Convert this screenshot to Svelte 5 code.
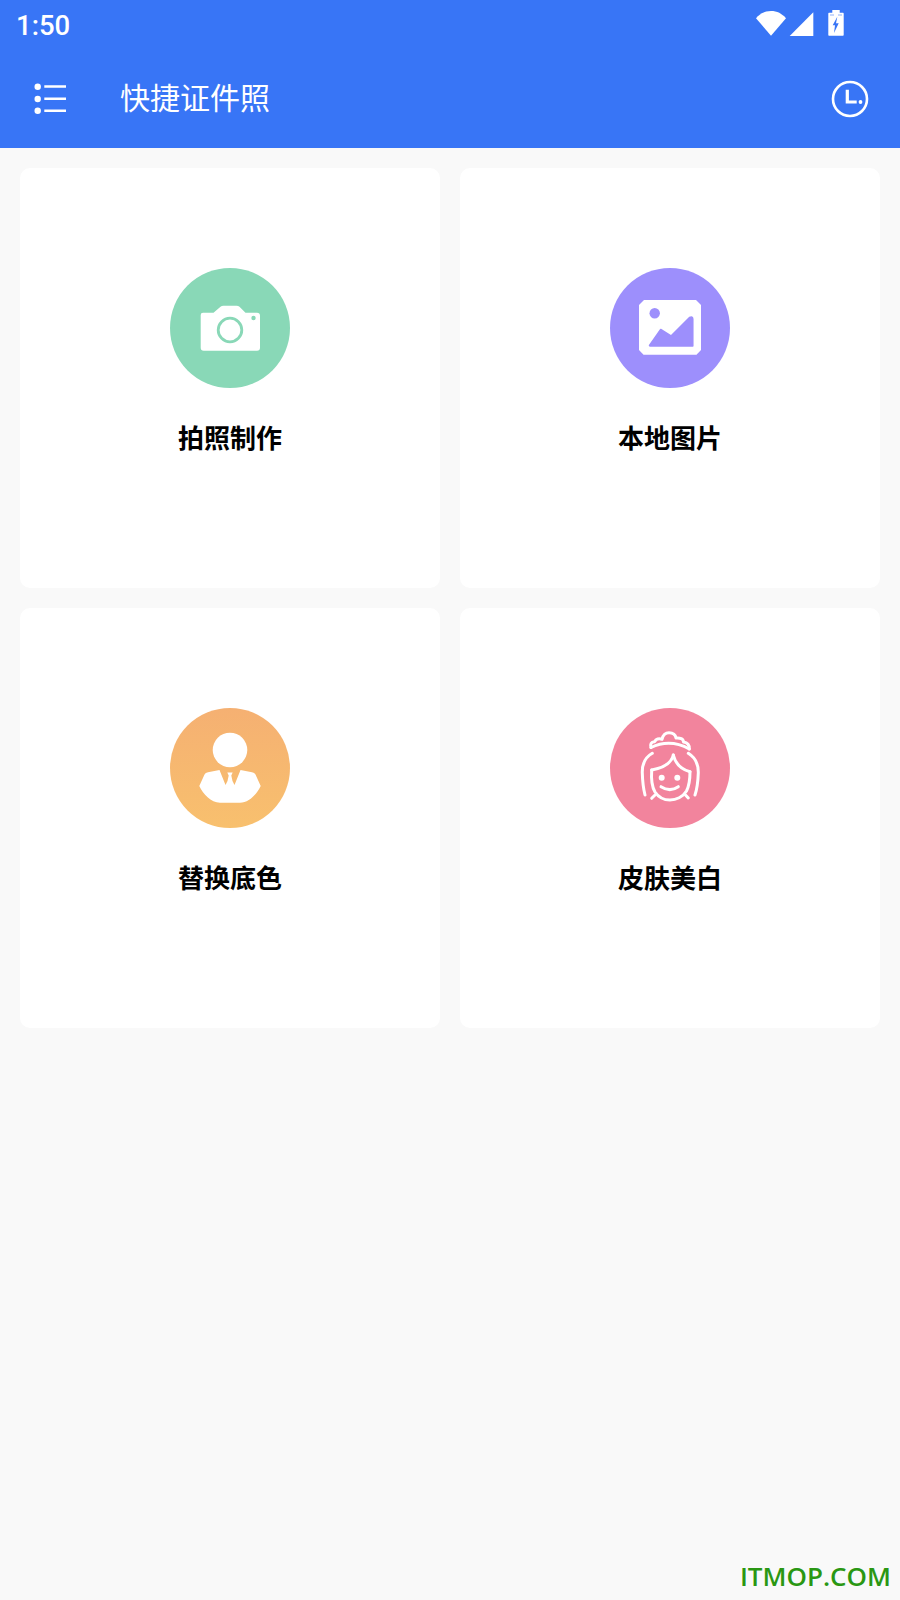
<script>
  const tools = [
    { key: 'camera', label: '拍照制作', tone: 'green' },
    { key: 'image', label: '本地图片', tone: 'purple' },
    { key: 'person', label: '替换底色', tone: 'orange' },
    { key: 'face', label: '皮肤美白', tone: 'pink' }
  ];
</script>

<div class="page">
  <header class="appbar">
    <div class="status">
      <span class="time">1:50</span>
      <svg class="status-icons" width="100" height="30" viewBox="0 0 100 30" aria-hidden="true">
        <path d="M15 29.7 0 12.3C4 7.5 9 5 15 5s11 2.5 15 7.3z" fill="#fff" />
        <path d="M57.3 6.3v24.4H33z" fill="#fff" />
        <path fill-rule="evenodd" fill="#fff" d="M76.3 4h7.4v2.7h3c.6 0 1 .4 1 1v21c0 .6-.4 1-1 1H73.300c-.6 0-1-.4-1-1v-21c0-.6.4-1 1-1h3zM81.300 10.700 76.700 19.300H79L78 27l4.700-9.700h-2.700z" />
        <path d="M74 9h4M82 9h4" stroke="#3875f6" stroke-width="1" opacity=".55" />
      </svg>
    </div>
    <div class="toolbar">
      <svg class="menu" width="40" height="34" viewBox="0 0 40 34" aria-hidden="true">
        <circle cx="7.700" cy="5.700" r="3.200" fill="#fff" />
        <circle cx="7.700" cy="18" r="3.200" fill="#fff" />
        <circle cx="7.700" cy="29.700" r="3.200" fill="#fff" />
        <path d="M14.300 5.500H36M14.300 17.700H36M14.300 29.700H36" stroke="#fff" stroke-width="2.600" fill="none" />
      </svg>
      <h1 class="title">快捷证件照</h1>
      <svg class="clock" width="38" height="38" viewBox="0 0 38 38" aria-hidden="true">
        <circle cx="19" cy="19" r="17" fill="none" stroke="#fff" stroke-width="2.600" />
        <path d="M16.300 9.700V22h9.400" fill="none" stroke="#fff" stroke-width="3.200" />
        <circle cx="29.500" cy="22" r="1.900" fill="#fff" />
      </svg>
    </div>
  </header>

  <main class="grid">
    {#each tools as tool}
      <button class="card" type="button">
        <span class="badge {tool.tone}">
          <svg width="120" height="120" viewBox="0 0 120 120" aria-hidden="true">
            {#if tool.key === 'camera'}
              <path fill="#fff" d="M33 44.700H43.500L50.500 38.700Q51.700 37.700 53.500 37.700H66.500Q68.300 37.700 69.500 38.700L75.500 44.700H87Q90 44.700 90 47.700V79.700Q90 82.700 87 82.700H33.700Q30.700 82.700 30.700 79.700V47Q30.700 44.700 33 44.700Z" />
              <circle cx="60" cy="62" r="11.800" fill="#fff" stroke="#89d8b7" stroke-width="2.800" />
              <circle cx="83.500" cy="50" r="2.200" fill="#89d8b7" />
            {:else if tool.key === 'image'}
              <path fill="#fff" d="M34 32H86L91 37V82L86.500 86.700H33.500L29 82V37Z" />
              <circle cx="44.700" cy="45.300" r="5.200" fill="#9d8ffc" />
              <path fill="#9d8ffc" stroke="#9d8ffc" stroke-width="1.500" stroke-linejoin="round" d="M39.500 77.500 50.700 61.500 61 68 79.500 49.500Q82.800 48 82.800 51V78H40Z" />
            {:else if tool.key === 'person'}
              <circle cx="60" cy="42" r="17.300" fill="#fff" />
              <path fill="#fff" d="M29.300 78 34.500 66.500Q35.500 64.700 38 64.300L49.500 62 55.500 77 57.500 73 58.700 67.500 57.300 64.500H62.700L61.300 67.500 62.500 73 64.500 77 70.500 62 82 64.300Q84.500 64.700 85.500 66.500L90.700 78C87 86 79 94.700 70 94.700H50C41 94.700 33 86 29.300 78Z" />
            {:else}
              <g fill="none" stroke="#fff" stroke-width="3" stroke-linecap="round" stroke-linejoin="round">
                <path d="M41 39.500C40 36 41 34 44.500 33.700C46 31 49 30 52 31.300C53 27 56 24.700 59 24.700C63 24.700 65.500 27 66 30C70 29.500 73.500 31 73.500 34C77 34.500 79.500 37 79.300 41" />
                <path d="M41 39.500Q60 30.500 79.300 41" />
                <path d="M42.300 45.300C34 50 32 57 32.300 65C32.500 73 33.500 81 35 87" />
                <path d="M78.300 45.300C86 50 88.500 57 88.300 65C88 73 87 81 85 87" />
                <path d="M63.300 47C62 53 58 59 41.700 62" />
                <path d="M63.300 47C65 54 70 61 80 63.700" />
                <path d="M41.700 62C41 72 42 79 45 84C49 90 55 92 60 92C66 92 73 89 76.500 83C79 78 80 71 80 63.700" />
                <path d="M41.700 90.300 45 87M75.500 87 78.300 90" />
                <path d="M51 78.700Q60 84.500 68.300 78.700" />
              </g>
              <circle cx="51.700" cy="69.700" r="3" fill="#fff" />
              <circle cx="67.300" cy="69.700" r="3" fill="#fff" />
            {/if}
          </svg>
        </span>
        <span class="label">{tool.label}</span>
      </button>
    {/each}
  </main>

  <span class="watermark">ITMOP.COM</span>
</div>

<style>
  :global(body) {
    margin: 0;
    background: #f9f9f9;
  }

  .page {
    position: relative;
    height: 1600px;
    background: #f9f9f9;
    font-family: "Noto Sans CJK SC", "Noto Sans", sans-serif;
    overflow: hidden;
  }

  .appbar {
    background: #3875f6;
    color: #fff;
    height: 148px;
  }

  .status {
    height: 50px;
    display: flex;
    align-items: flex-start;
    justify-content: space-between;
    padding: 0 44px 0 16px;
  }

  .time {
    font-family: Roboto, sans-serif;
    font-size: 27.500px;
    font-weight: 500;
    line-height: 52px;
  }

  .status-icons {
    margin-top: 6px;
  }

  .toolbar {
    height: 98px;
    display: flex;
    align-items: center;
    padding: 0 30px;
  }

  .menu {
    flex-shrink: 0;
    margin-bottom: 2px;
  }

  .title {
    flex: 1;
    margin: 0 0 6px 50px;
    font-size: 30px;
    font-weight: 400;
    line-height: 1;
  }

  .clock {
    flex-shrink: 0;
    margin-right: 1px;
    margin-bottom: 1px;
  }

  .grid {
    display: grid;
    grid-template-columns: 420px 420px;
    grid-auto-rows: 420px;
    gap: 20px;
    padding: 20px;
  }

  .card {
    display: flex;
    flex-direction: column;
    align-items: center;
    padding: 100px 0 0;
    border: 0;
    border-radius: 10px;
    background: #fff;
    font-family: inherit;
  }

  .badge {
    width: 120px;
    height: 120px;
    border-radius: 50%;
    display: block;
  }

  .badge svg {
    display: block;
  }

  .green { background: #89d8b7; }
  .purple { background: #9d8ffc; }
  .orange { background: linear-gradient(#f5b072, #f8c06e); }
  .pink { background: #f2849d; }

  .label {
    margin-top: 31px;
    font-size: 26px;
    font-weight: 700;
    line-height: 36px;
    color: #000;
  }

  .watermark {
    position: absolute;
    right: 9px;
    bottom: 8px;
    font-family: "Open Sans", sans-serif;
    font-size: 26px;
    font-weight: 600;
    line-height: 32px;
    color: #2a9713;
  }
</style>
